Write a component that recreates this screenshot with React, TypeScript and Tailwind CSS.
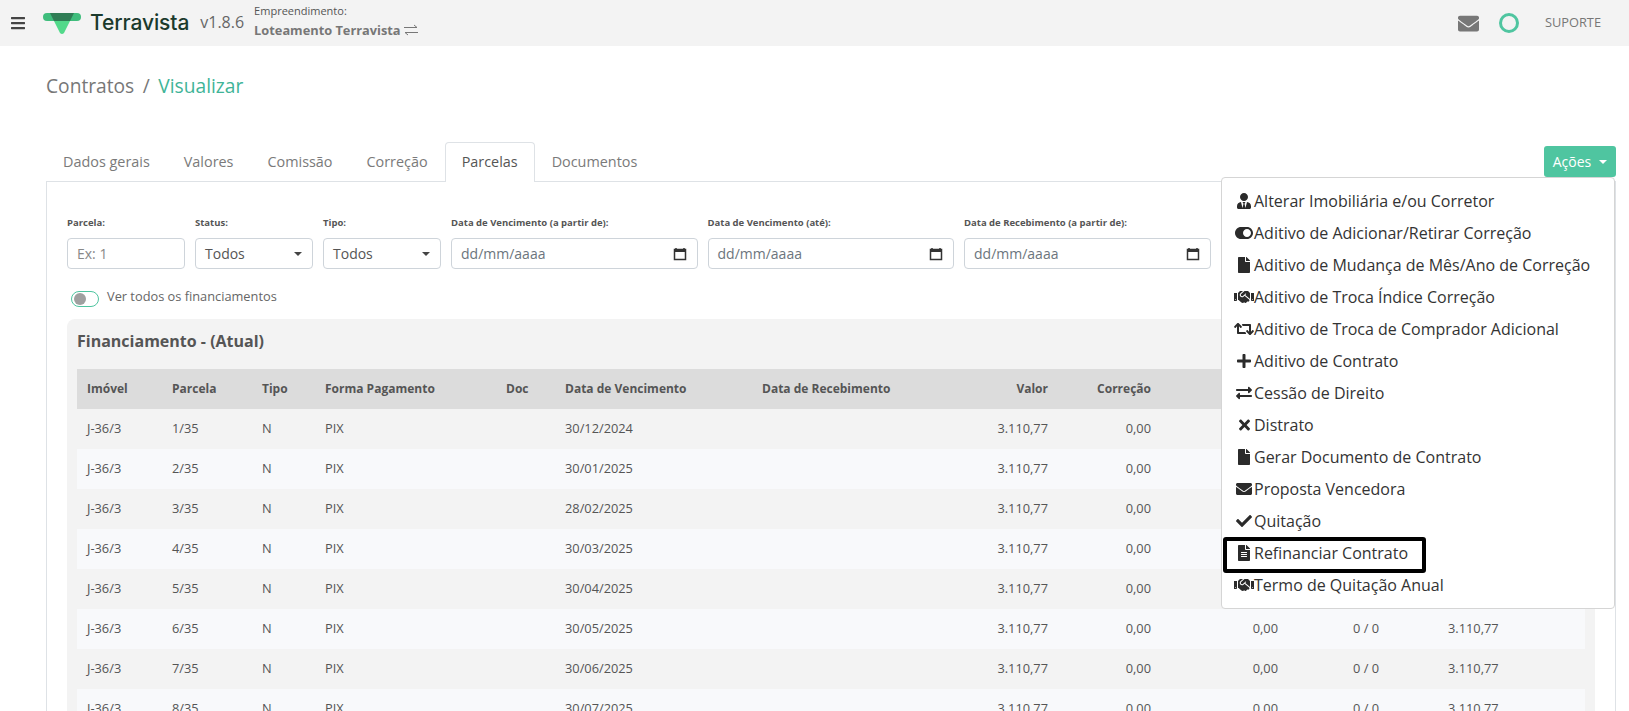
import { FaBars, FaCheck, FaEnvelope, FaExchangeAlt, FaFile, FaFileAlt, FaHandshake, FaPlus, FaRetweet, FaTimes, FaToggleOn, FaUserTie } from "react-icons/fa";
import type { IconType } from "react-icons";

const menuItems: [IconType, string, string][] = [
  [FaUserTie, "w-[14px]", "Alterar Imobiliária e/ou Corretor"],
  [FaToggleOn, "w-[18px]", "Aditivo de Adicionar/Retirar Correção"],
  [FaFile, "w-[12px]", "Aditivo de Mudança de Mês/Ano de Correção"],
  [FaHandshake, "w-[20px]", "Aditivo de Troca Índice Correção"],
  [FaRetweet, "w-[20px]", "Aditivo de Troca de Comprador Adicional"],
  [FaPlus, "w-[14px]", "Aditivo de Contrato"],
  [FaExchangeAlt, "w-[16px]", "Cessão de Direito"],
  [FaTimes, "w-[11px]", "Distrato"],
  [FaFile, "w-[12px]", "Gerar Documento de Contrato"],
  [FaEnvelope, "w-[16px]", "Proposta Vencedora"],
  [FaCheck, "w-[16px]", "Quitação"],
  [FaFileAlt, "w-[12px]", "Refinanciar Contrato"],
  [FaHandshake, "w-[20px]", "Termo de Quitação Anual"],
];

const tabs = ["Dados gerais", "Valores", "Comissão", "Correção", "Parcelas", "Documentos"];

const rows = [
  ["1/35", "30/12/2024"],
  ["2/35", "30/01/2025"],
  ["3/35", "28/02/2025"],
  ["4/35", "30/03/2025"],
  ["5/35", "30/04/2025"],
  ["6/35", "30/05/2025"],
  ["7/35", "30/06/2025"],
  ["8/35", "30/07/2025"],
];

function Logo() {
  return (
    <svg width="38" height="22" viewBox="0 0 38 22" className="shrink-0 mt-[1px]">
      <path d="M4 0H34A4 4 0 0 1 34 8H4A4 4 0 0 1 4 0Z" fill="#3fbd7c" />
      <path d="M7 0H31L27 8H11Z" fill="#2f7d55" />
      <path d="M11 8H27L21 20Q19 22 17 20Z" fill="#52d98a" />
    </svg>
  );
}

function Label({ text }: { text: string }) {
  return <label className="block text-[9.5px] font-bold text-[#555] leading-[14px] mb-[8px] whitespace-nowrap">{text}</label>;
}

function DateField({ label }: { label: string }) {
  return (
    <div className="w-[246.5px] shrink-0">
      <Label text={label} />
      <div className="h-[31px] border border-[#ced4da] rounded-[4px] flex items-center justify-between pl-[9px] pr-[10px] text-[14px] text-[#6c757d] bg-white">
        <span>dd/mm/aaaa</span>
        <svg width="14" height="14" viewBox="0 0 14 14">
          <path d="M3 1v2M11 1v2" stroke="#333" strokeWidth="1.5" />
          <path d="M1.5 2.5h11v10h-11z" fill="none" stroke="#333" strokeWidth="1.5" />
          <path d="M1.5 2.5h11v2.5h-11z" fill="#333" />
        </svg>
      </div>
    </div>
  );
}

function SelectField({ label }: { label: string }) {
  return (
    <div className="w-[118px] shrink-0">
      <Label text={label} />
      <div className="h-[31px] border border-[#ced4da] rounded-[4px] flex items-center justify-between pl-[9px] pr-[10px] text-[14px] text-[#555] bg-white">
        <span>Todos</span>
        <span className="w-0 h-0 border-x-[4px] border-x-transparent border-t-[4px] border-t-[#444]" />
      </div>
    </div>
  );
}

export default function App() {
  return (
    <div className="relative h-[711px] overflow-hidden bg-white font-['Open_Sans',sans-serif] text-[#555]">
      <header className="h-[46px] bg-[#f3f3f3] flex items-center pl-[11px] pr-[28px]">
        <FaBars className="w-[14px] h-[16px] text-[#444] mr-[18px]" />
        <Logo />
        <span className="ml-[9px] -mt-[2px] text-[21px] leading-none font-medium text-[#1b3a2c] font-['Inter',sans-serif] tracking-[-0.1px]">Terravista</span>
        <span className="ml-[11px] -mt-[2px] text-[16px] text-[#666]">v1.8.6</span>
        <div className="ml-[10px] flex flex-col -mt-[5px]">
          <span className="text-[11px] leading-[14px] text-[#555]">Empreendimento:</span>
          <span className="mt-[4px] text-[12.8px] leading-[16px] font-bold text-[#777] flex items-center gap-[3px]">
            Loteamento Terravista
            <svg width="14" height="12" viewBox="0 0 14 12" fill="none" stroke="#777" strokeWidth="1">
              <path d="M0 3.5h13M10 1l3 2.5M14 8.5H1M4 11L1 8.5" />
            </svg>
          </span>
        </div>
        <FaEnvelope className="ml-auto w-[21px] h-[21px] text-[#777]" />
        <span className="ml-[20px] w-[20px] h-[20px] rounded-full border-[3px] border-[#4fc5a0]" />
        <span className="ml-[26px] text-[12.8px] text-[#777]">SUPORTE</span>
      </header>

      <div className="pl-[46px] pt-[27px] h-[96px] text-[19.2px] leading-[26px] text-[#777]">
        Contratos <span className="mx-[3.5px]">/</span> <span className="text-[#3fb498]">Visualizar</span>
      </div>

      <div className="pl-[46px] pr-[13px]">
        <div className="flex items-end justify-between h-[39px]">
          <div className="flex -mb-px relative z-10">
            {tabs.map((tab) => (
              <div
                key={tab}
                className={`h-[40px] px-[16px] pb-[2px] flex items-center text-[14.4px] border border-b-0 rounded-t-[4px] ${tab === "Parcelas" ? "bg-white border-[#dee2e6] text-[#555]" : "border-transparent text-[#7a7a7a]"}`}
              >
                {tab}
              </div>
            ))}
          </div>
          <button className="self-start mt-[4px] w-[72px] h-[31px] bg-[#4fc5a0] rounded-[3px] text-white text-[14px] flex items-center justify-center gap-[8px]">
            Ações
            <span className="w-0 h-0 border-x-[4px] border-x-transparent border-t-[4px] border-t-white" />
          </button>
        </div>

        <div className="border border-[#dee2e6] h-[600px] pl-[20px] pr-[20px] pt-[34px]">
          <div className="flex gap-[10px]">
            <div className="w-[118px] shrink-0">
              <Label text="Parcela:" />
              <div className="h-[31px] border border-[#ced4da] rounded-[4px] flex items-center pl-[9px] text-[14px] text-[#888] bg-white">Ex: 1</div>
            </div>
            <SelectField label="Status:" />
            <SelectField label="Tipo:" />
            <DateField label="Data de Vencimento (a partir de):" />
            <DateField label="Data de Vencimento (até):" />
            <DateField label="Data de Recebimento (a partir de):" />
          </div>

          <div className="flex items-center mt-[22px] h-[16px] ml-[4px]">
            <span className="w-[28px] h-[16px] rounded-full border border-[#4fc5a0] flex items-center pl-[2px]">
              <span className="w-[12px] h-[12px] rounded-full bg-[#a0a0a0]" />
            </span>
            <span className="ml-[8px] mb-[4px] text-[12.8px] text-[#666]">Ver todos os financiamentos</span>
          </div>

          <div className="mt-[12px] bg-[#f3f3f3] rounded-t-[8px] pl-[10px] pr-[10px]">
            <h2 className="h-[50px] flex items-center text-[16px] font-bold text-[#555] pb-[7px]">Financiamento - (Atual)</h2>
            <table className="w-[1508px] table-fixed text-[12.8px] text-[#555]">
              <colgroup>
                <col className="w-[95px]" />
                <col className="w-[90px]" />
                <col className="w-[63px]" />
                <col className="w-[181px]" />
                <col className="w-[59px]" />
                <col className="w-[197px]" />
                <col className="w-[200px]" />
                <col className="w-[86px]" />
                <col className="w-[103px]" />
                <col className="w-[127px]" />
                <col className="w-[101px]" />
                <col />
              </colgroup>
              <thead className="text-[12px]">
                <tr className="h-[40px] bg-[#dcdcdc]">
                  <th className="pl-[10px] text-left font-bold">Imóvel</th>
                  <th className="text-left font-bold">Parcela</th>
                  <th className="text-left font-bold">Tipo</th>
                  <th className="text-left font-bold">Forma Pagamento</th>
                  <th className="text-left font-bold">Doc</th>
                  <th className="text-left font-bold">Data de Vencimento</th>
                  <th className="text-left font-bold">Data de Recebimento</th>
                  <th className="text-right font-bold">Valor</th>
                  <th className="text-right font-bold">Correção</th>
                  <th className="text-right font-bold">Juros</th>
                  <th />
                  <th />
                </tr>
              </thead>
              <tbody>
                {rows.map(([parcela, vencimento], i) => (
                  <tr key={parcela} className={`h-[40px] ${i % 2 === 0 ? "bg-[#f3f3f3]" : "bg-[#f8f9fb]"}`}>
                    <td className="pl-[10px]">J-36/3</td>
                    <td>{parcela}</td>
                    <td>N</td>
                    <td>PIX</td>
                    <td />
                    <td>{vencimento}</td>
                    <td />
                    <td className="text-right">3.110,77</td>
                    <td className="text-right">0,00</td>
                    <td className="text-right">0,00</td>
                    <td className="text-right">0 / 0</td>
                    <td className="pl-[69px]">3.110,77</td>
                  </tr>
                ))}
              </tbody>
            </table>
          </div>
        </div>
      </div>

      <div className="absolute left-[1221px] top-[177px] w-[394px] h-[432px] bg-white border border-[#d5d5d5] rounded-[4px] py-[7px] pl-[12px] z-20">
        {menuItems.map(([Icon, iconWidth, text]) => (
          <div key={text} className="h-[32px] flex items-center text-[16px] text-[#333] whitespace-nowrap">
            <span className="w-[20px] flex justify-center shrink-0">
              <Icon className={`h-[16px] shrink-0 text-[#2b2b2b] ${iconWidth}`} />
            </span>
            <span>{text}</span>
          </div>
        ))}
      </div>
      <div className="absolute left-[1223px] top-[537px] w-[203px] h-[36px] border-[4px] border-black rounded-[3px] z-30" />
    </div>
  );
}
